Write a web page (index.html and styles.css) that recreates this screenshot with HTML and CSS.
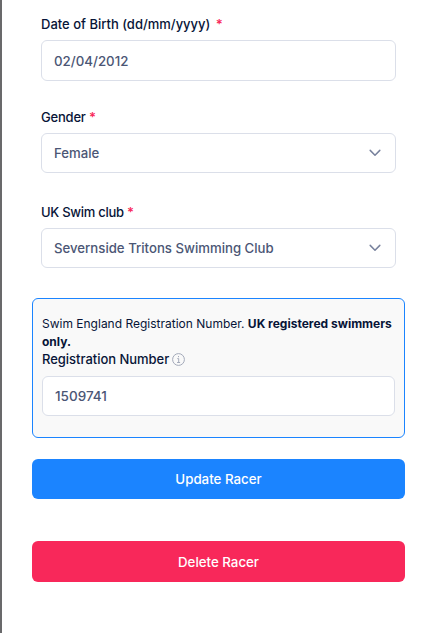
FILE: index.html
```html
<!DOCTYPE html>
<html lang="en">
<head>
    <meta charset="UTF-8">
    <meta name="viewport" content="width=device-width, initial-scale=1.0">
    <title>Edit Racer</title>
    <link rel="stylesheet" href="styles.css">
</head>
<body>
    <form class="racer-form">
        <div class="field field-dob">
            <label class="label" for="dob">Date of Birth (dd/mm/yyyy) <span class="required spaced">*</span></label>
            <input class="control" type="text" id="dob" value="02/04/2012">
        </div>

        <div class="field field-gender">
            <label class="label" for="gender">Gender <span class="required">*</span></label>
            <div class="select-wrap">
                <select class="control" id="gender">
                    <option>Female</option>
                </select>
                <svg class="chevron" viewBox="0 0 12 8"><path d="M1.2 1.4 6 6.2l4.8-4.8"/></svg>
            </div>
        </div>

        <div class="field field-club">
            <label class="label" for="club">UK Swim club <span class="required">*</span></label>
            <div class="select-wrap">
                <select class="control" id="club">
                    <option>Severnside Tritons Swimming Club</option>
                </select>
                <svg class="chevron" viewBox="0 0 12 8"><path d="M1.2 1.4 6 6.2l4.8-4.8"/></svg>
            </div>
        </div>

        <div class="registration">
            <p class="note">Swim England Registration Number. <strong>UK registered swimmers only.</strong></p>
            <label class="label label-info" for="reg-number">
                Registration Number
                <svg class="info" viewBox="0 0 13 13">
                    <circle cx="6.5" cy="6.5" r="5.9"/>
                    <path d="M5.3 5.6h1.4v3.8M5.1 9.5h3M6.5 3v1.2"/>
                </svg>
            </label>
            <input class="control" type="text" id="reg-number" value="1509741">
        </div>

        <button class="btn btn-update" type="button">Update Racer</button>
        <button class="btn btn-delete" type="button">Delete Racer</button>
    </form>
</body>
</html>
```

FILE: styles.css
```css
:root {
    --text-color: #071437;
    --control-color: #4b5675;
    --border-color: #dbdfe9;
    --primary-color: #1b84ff;
    --danger-color: #f8285a;
}

* {
    margin: 0;
    padding: 0;
    box-sizing: border-box;
    font-family: Inter, "Liberation Sans", sans-serif;
}

body {
    min-height: 100vh;
    background: white;
    border-left: 2px solid #69696b;
    color: var(--text-color);
    font-size: 13px;
    overflow: hidden;
}

.racer-form {
    display: flex;
    flex-direction: column;
    padding: 15px 30px 0;
}

.field {
    display: flex;
    flex-direction: column;
    gap: 7px;
    padding: 0 9px;
}

.field-dob {
    margin-bottom: 27px;
}

.field-dob .control {
    height: 41px;
}

.field-gender {
    margin-bottom: 30px;
}

.field-club {
    margin-bottom: 30px;
}

.label {
    font-weight: 500;
    line-height: 18px;
}

.field-gender .label {
    letter-spacing: -0.2px;
}

.field-club .label {
    letter-spacing: -0.27px;
}

.required {
    color: var(--danger-color);
    font-weight: 600;
}

.spaced {
    margin-left: 2px;
}

.control {
    display: block;
    width: 100%;
    height: 40px;
    padding: 0 12px;
    border: 1px solid var(--border-color);
    border-radius: 6px;
    background: white;
    color: var(--control-color);
    font-size: 13.3px;
    font-weight: 500;
    outline: none;
    appearance: none;
}

.select-wrap {
    position: relative;
}

.select-wrap .control {
    font-size: 13.2px;
}

.chevron {
    position: absolute;
    top: 16px;
    right: 15px;
    width: 12px;
    height: 8px;
    fill: none;
    stroke: #78829d;
    stroke-width: 1.5;
    stroke-linecap: round;
    stroke-linejoin: round;
    pointer-events: none;
}

.registration {
    height: 140px;
    padding: 16px 9px 0;
    border: 1px solid var(--primary-color);
    border-radius: 6px;
    background: #f9f9f9;
}

.registration .control {
    font-size: 13.5px;
}

.note {
    font-size: 12px;
    line-height: 18px;
}

.note strong {
    font-weight: 700;
}

.label-info {
    display: flex;
    align-items: center;
    gap: 3px;
    margin-bottom: 8px;
    line-height: 17px;
    letter-spacing: -0.03px;
}

.info {
    width: 13px;
    height: 13px;
    fill: none;
    stroke: #a3a9b9;
    stroke-width: 1;
}

.btn {
    height: 40px;
    border: none;
    border-radius: 6px;
    color: white;
    font-size: 13.3px;
    font-weight: 500;
    cursor: pointer;
}

.btn-update {
    margin-top: 21px;
    background: var(--primary-color);
}

.btn-delete {
    height: 41px;
    margin-top: 42px;
    background: var(--danger-color);
}
```
